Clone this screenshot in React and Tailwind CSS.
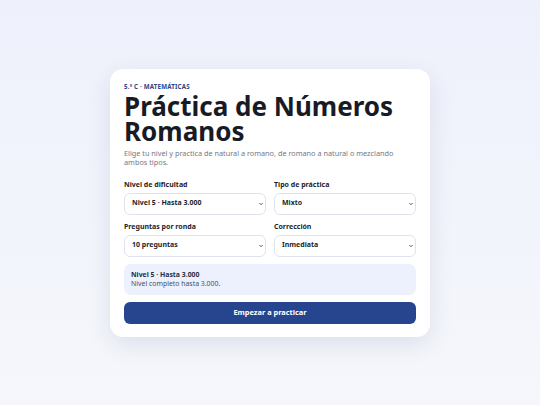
import React, { useState } from 'react';

const levels = {
  5: { label: 'Nivel 5 · Hasta 3.000', desc: 'Nivel completo hasta 3.000.' },
};

const Field = ({ label, value, onChange, options }) => (
  <div className="flex flex-col">
    <label className="block text-[7px] font-bold text-[#1c1f2b] leading-[9px] mb-[4px]">{label}</label>
    <div className="relative">
      <select
        value={value}
        onChange={(e) => onChange(e.target.value)}
        className="block appearance-none h-[22px] w-full bg-white border border-[#dfe3ec] rounded-[6px] pl-[7px] pr-[12px] text-[7px] font-bold text-[#1c1f2b]"
      >
        {options.map((o) => (
          <option key={o.value} value={o.value}>{o.label}</option>
        ))}
      </select>
      <svg
        className="absolute right-[3px] top-1/2 -translate-y-1/2 w-[4px] h-[4px] pointer-events-none"
        viewBox="0 0 8 8"
        fill="none"
        stroke="#3a3f4d"
        strokeWidth="1.8"
        strokeLinecap="round"
        strokeLinejoin="round"
      >
        <path d="M1.5 2.8 4 5.3 6.5 2.8" />
      </svg>
    </div>
  </div>
);

const App = () => {
  const [nivel, setNivel] = useState('5');
  const [tipo, setTipo] = useState('mixto');
  const [preguntas, setPreguntas] = useState('10');
  const [correccion, setCorreccion] = useState('inmediata');

  return (
    <div
      className="min-h-screen flex items-center justify-center bg-gradient-to-b from-[#eef1fb] to-[#f5f7fb]"
      style={{ fontFamily: '"Noto Sans", sans-serif' }}
    >
      <div className="w-[320px] bg-white rounded-[13px] shadow-[0_8px_24px_rgba(30,40,80,0.10)] px-[14px] pt-[14px] pb-[13px]">
        <div className="text-[6.2px] font-bold tracking-[0.03em] text-[#2c4587] leading-[8px]">
          5.º C · MATEMÁTICAS
        </div>
        <h1 className="mt-[3px] text-[26px] font-bold leading-[25px] text-[#191b24]">
          Práctica de Números Romanos
        </h1>
        <p className="mt-[5px] max-w-[272px] text-[7.3px] leading-[9.5px] text-[#737888]">
          Elige tu nivel y practica de natural a romano, de romano a natural o mezclando ambos tipos.
        </p>

        <div className="mt-[12px] grid grid-cols-2 gap-x-[8px] gap-y-[7px]">
          <Field
            label="Nivel de dificultad"
            value={nivel}
            onChange={setNivel}
            options={[{ value: '5', label: 'Nivel 5 · Hasta 3.000' }]}
          />
          <Field
            label="Tipo de práctica"
            value={tipo}
            onChange={setTipo}
            options={[{ value: 'mixto', label: 'Mixto' }]}
          />
          <Field
            label="Preguntas por ronda"
            value={preguntas}
            onChange={setPreguntas}
            options={[{ value: '10', label: '10 preguntas' }]}
          />
          <Field
            label="Corrección"
            value={correccion}
            onChange={setCorreccion}
            options={[{ value: 'inmediata', label: 'Inmediata' }]}
          />
        </div>

        <div className="mt-[7px] bg-[#edf1fd] rounded-[7px] px-[7px] py-[6px]">
          <div className="text-[6.9px] font-bold text-[#2a2f40] leading-[9.5px]">{levels[nivel].label}</div>
          <div className="text-[6.9px] text-[#4a5063] leading-[9.5px]">{levels[nivel].desc}</div>
        </div>

        <button className="block mt-[7px] w-full h-[22px] rounded-[6px] bg-[#27458f] text-white text-[7.4px] font-bold">
          Empezar a practicar
        </button>
      </div>
    </div>
  );
};

export default App;
